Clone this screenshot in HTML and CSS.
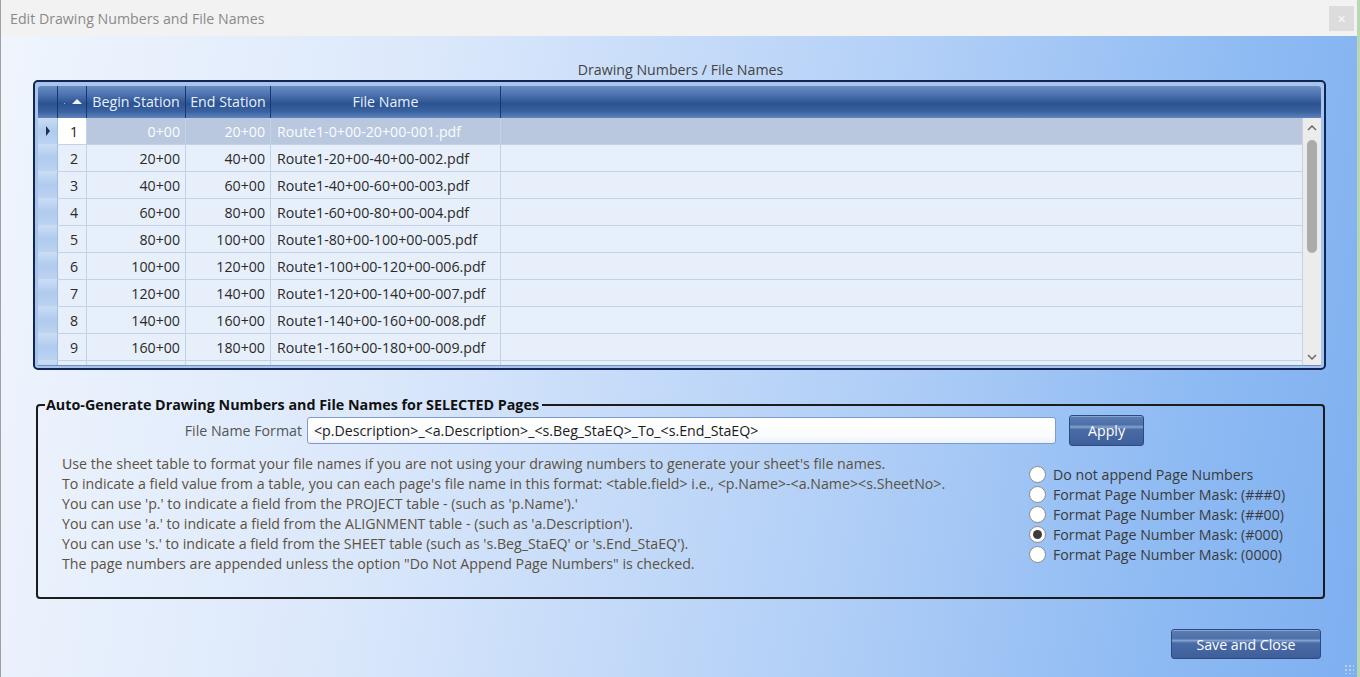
FILE: index.html
```html
<!DOCTYPE html>
<html lang="en">
<head>
  <meta charset="UTF-8">
  <title>Edit Drawing Numbers and File Names</title>
  <link rel="stylesheet" href="styles.css">
</head>
<body>
  <div class="dialog">
    <div class="titlebar">
      <span class="title">Edit Drawing Numbers and File Names</span>
      <span class="close">&#x2715;</span>
    </div>

    <div class="content">
      <div class="grid-caption">Drawing Numbers / File Names</div>

      <div class="grid">
        <div class="grid-inner">
          <div class="grid-head">
            <div class="hc c-sel"></div>
            <div class="hc c-num"><span class="dot"></span><span class="sort"></span></div>
            <div class="hc c-beg">Begin Station</div>
            <div class="hc c-end">End Station</div>
            <div class="hc c-file">File Name</div>
            <div class="hc c-fill"></div>
          </div>
          <div class="grid-body">
            <div class="rows">
              <div class="row selected">
                <div class="c c-sel"><span class="cur"></span></div>
                <div class="c c-num">1</div>
                <div class="c c-beg">0+00</div>
                <div class="c c-end">20+00</div>
                <div class="c c-file">Route1-0+00-20+00-001.pdf</div>
                <div class="c c-fill"></div>
              </div>
              <div class="row">
                <div class="c c-sel"></div><div class="c c-num">2</div><div class="c c-beg">20+00</div><div class="c c-end">40+00</div><div class="c c-file">Route1-20+00-40+00-002.pdf</div><div class="c c-fill"></div>
              </div>
              <div class="row">
                <div class="c c-sel"></div><div class="c c-num">3</div><div class="c c-beg">40+00</div><div class="c c-end">60+00</div><div class="c c-file">Route1-40+00-60+00-003.pdf</div><div class="c c-fill"></div>
              </div>
              <div class="row">
                <div class="c c-sel"></div><div class="c c-num">4</div><div class="c c-beg">60+00</div><div class="c c-end">80+00</div><div class="c c-file">Route1-60+00-80+00-004.pdf</div><div class="c c-fill"></div>
              </div>
              <div class="row">
                <div class="c c-sel"></div><div class="c c-num">5</div><div class="c c-beg">80+00</div><div class="c c-end">100+00</div><div class="c c-file">Route1-80+00-100+00-005.pdf</div><div class="c c-fill"></div>
              </div>
              <div class="row">
                <div class="c c-sel"></div><div class="c c-num">6</div><div class="c c-beg">100+00</div><div class="c c-end">120+00</div><div class="c c-file">Route1-100+00-120+00-006.pdf</div><div class="c c-fill"></div>
              </div>
              <div class="row">
                <div class="c c-sel"></div><div class="c c-num">7</div><div class="c c-beg">120+00</div><div class="c c-end">140+00</div><div class="c c-file">Route1-120+00-140+00-007.pdf</div><div class="c c-fill"></div>
              </div>
              <div class="row">
                <div class="c c-sel"></div><div class="c c-num">8</div><div class="c c-beg">140+00</div><div class="c c-end">160+00</div><div class="c c-file">Route1-140+00-160+00-008.pdf</div><div class="c c-fill"></div>
              </div>
              <div class="row">
                <div class="c c-sel"></div><div class="c c-num">9</div><div class="c c-beg">160+00</div><div class="c c-end">180+00</div><div class="c c-file">Route1-160+00-180+00-009.pdf</div><div class="c c-fill"></div>
              </div>
              <div class="row">
                <div class="c c-sel"></div><div class="c c-num"></div><div class="c c-beg"></div><div class="c c-end"></div><div class="c c-file"></div><div class="c c-fill"></div>
              </div>
            </div>
            <div class="vscroll">
              <svg class="arrow" width="12" height="8" viewBox="0 0 12 8"><path d="M2 6 L6 2 L10 6" fill="none" stroke="#606060" stroke-width="1.3"/></svg>
              <div class="track"><div class="thumb"></div></div>
              <svg class="arrow" width="12" height="8" viewBox="0 0 12 8"><path d="M2 2 L6 6 L10 2" fill="none" stroke="#606060" stroke-width="1.3"/></svg>
            </div>
          </div>
        </div>
      </div>

      <fieldset class="autogen">
        <legend>Auto-Generate Drawing Numbers and File Names for SELECTED Pages</legend>
        <div class="format-row">
          <label class="format-label">File Name Format</label>
          <div class="format-input">&lt;p.Description&gt;_&lt;a.Description&gt;_&lt;s.Beg_StaEQ&gt;_To_&lt;s.End_StaEQ&gt;</div>
          <button class="btn apply">Apply</button>
        </div>
        <div class="help-row">
          <div class="help">
            <p>Use the sheet table to format your file names if you are not using your drawing numbers to generate your sheet's file names.</p>
            <p>To indicate a field value from a table, you can each page's file name in this format: &lt;table.field&gt; i.e., &lt;p.Name&gt;-&lt;a.Name&gt;&lt;s.SheetNo&gt;.</p>
            <p>You can use 'p.' to indicate a field from the PROJECT table - (such as 'p.Name').'</p>
            <p>You can use 'a.' to indicate a field from the ALIGNMENT table - (such as 'a.Description').</p>
            <p>You can use 's.' to indicate a field from the SHEET table (such as 's.Beg_StaEQ' or 's.End_StaEQ').</p>
            <p>The page numbers are appended unless the option "Do Not Append Page Numbers" is checked.</p>
          </div>
          <div class="radios">
            <div class="radio"><span class="dot-r"></span>Do not append Page Numbers</div>
            <div class="radio"><span class="dot-r"></span>Format Page Number Mask: (###0)</div>
            <div class="radio"><span class="dot-r"></span>Format Page Number Mask: (##00)</div>
            <div class="radio"><span class="dot-r on"></span>Format Page Number Mask: (#000)</div>
            <div class="radio"><span class="dot-r"></span>Format Page Number Mask: (0000)</div>
          </div>
        </div>
      </fieldset>

      <div class="footer">
        <button class="btn save">Save and Close</button>
      </div>
    </div>
    <span class="grip"></span>
  </div>
</body>
</html>
```

FILE: styles.css
```css
html, body { margin: 0; height: 100%; }
body { font-family: "Open Sans", "Noto Sans", sans-serif; font-size: 14.2px; background: #b9d7b0; overflow: hidden; }

.dialog { position: relative; width: 1357px; height: 677px; display: flex; flex-direction: column; border-left: 1px solid #a0a0a0; box-sizing: border-box;
  background: linear-gradient(100deg, #f0f5fd 0%, #dbe8fb 30%, #b3d0f7 62%, #8fbbf3 85%, #7eaff0 100%); }

.titlebar { height: 36px; flex: none; background: #f2f2f2; display: flex; align-items: center; justify-content: space-between; padding: 0 3px 0 9px; }
.title { color: #8a8a8a; font-size: 14.2px; }
.close { width: 25px; height: 25px; background: #dcdcdc; color: #f8f8f8; font-size: 11px; display: flex; align-items: center; justify-content: center; }

.content { flex: 1; display: flex; flex-direction: column; padding: 24px 31px 0 32px; }
.grid-caption { text-align: center; color: #444; line-height: 20px; height: 20px; margin-left: 2px; }

.grid { height: 290px; box-sizing: border-box; border: 2px solid #0f2656; border-radius: 5px; padding: 4px 3px 3px 3px; background: #a9c4ea; }
.grid-inner { height: 100%; display: flex; flex-direction: column; border-bottom: 1px solid #6e8fc2; }

.grid-head { height: 32px; flex: none; display: flex; border-radius: 3px 3px 0 0;
  background: linear-gradient(#6a8cc2 0%, #4f75b0 25%, #2c5391 55%, #3a62a0 80%, #5f84bd 100%); }
.hc { color: #e9f0fb; line-height: 31px; text-align: center; border-right: 1px solid #173672; box-sizing: border-box; white-space: nowrap; }
.hc.c-fill { border-right: none; }
.hc.c-num { position: relative; }
.sort { position: absolute; left: 14px; top: 13px; border-left: 5px solid transparent; border-right: 5px solid transparent; border-bottom: 5px solid #eef3fb; }
.dot { position: absolute; left: 6px; top: 17px; width: 1px; height: 1px; background: #9db5da; }

.c-sel { width: 20px; flex: none; }
.c-num { width: 29px; flex: none; }
.c-beg { width: 99px; flex: none; }
.c-end { width: 85px; flex: none; }
.c-file { width: 230px; flex: none; }
.c-fill { flex: 1; }

.grid-body { flex: 1; display: flex; min-height: 0; }
.rows { flex: 1; overflow: hidden; background: #e7effa; }
.row { height: 27px; display: flex; }
.c { box-sizing: border-box; border-right: 1px solid #c3d2e6; border-bottom: 1px solid #c3d2e6; line-height: 27px; color: #2a2a2a; background: #e7effa; white-space: nowrap; }
.c.c-sel { background: linear-gradient(#c9dcf4, #b0cbee 50%, #bcd3f1); border-right: 1px solid #a3bde2; border-bottom: 1px solid #c9dbf2; position: relative; }
.c.c-num { text-align: right; padding-right: 8px; }
.c.c-beg, .c.c-end { text-align: right; padding-right: 5px; }
.c.c-file { padding-left: 6px; }
.row.selected .c { background: #b9c8de; color: #fbfcff; }
.row.selected .c.c-num { background: #ffffff; color: #222; }
.row.selected .c.c-sel { background: linear-gradient(#c9dcf4, #b0cbee 50%, #bcd3f1); }
.cur { position: absolute; left: 8px; top: 8px; border-top: 5px solid transparent; border-bottom: 5px solid transparent; border-left: 4px solid #1b2f55; }

.vscroll { width: 18px; flex: none; background: #ececec; display: flex; flex-direction: column; align-items: center; }
.arrow { margin: 6px 0 4px; flex: none; }
.track { flex: 1; width: 100%; display: flex; justify-content: center; }
.thumb { width: 10px; height: 113px; background: #ababab; border-radius: 5px; margin-top: 4px; }

.autogen { margin: 27px 1px 0 3px; border: 2px solid #1c1c1c; border-radius: 4px; padding: 0; height: 202px; box-sizing: border-box; min-width: 0; }
.autogen legend { font-weight: bold; font-size: 14.3px; color: #111; padding: 0 3px 0 1px; margin-left: 7px; line-height: 16px; }
.format-row { display: flex; align-items: center; margin-top: 2px; height: 30px; }
.format-label { width: 264px; text-align: right; color: #555; padding-right: 5px; }
.format-input { width: 749px; height: 27px; box-sizing: border-box; border: 1px solid #7d9ccc; border-radius: 3px; background: linear-gradient(#ffffff, #fbfcfe 70%, #eef2f8); padding-left: 6px; line-height: 25px; color: #1a1a1a; white-space: nowrap; }

.btn { font-family: inherit; font-size: 14.2px; color: #fff; border: 1px solid #2a4a82; border-radius: 3px; cursor: pointer;
  background: linear-gradient(#5a7db5 0%, #4d70aa 30%, #86a2cf 38%, #4a6ca6 46%, #3e5f99 100%); box-shadow: inset 0 1px 0 rgba(255,255,255,0.3); }
.apply { width: 75px; height: 31px; margin-left: 13px; }

.help-row { display: flex; margin-top: 9px; }
.help { flex: 1; padding-left: 24px; color: #5b5242; }
.help p { margin: 0; line-height: 20px; white-space: nowrap; }
.radios { flex: none; width: 294px; margin-top: 10px; }
.radio { display: flex; align-items: center; height: 20px; color: #3a3a3a; white-space: nowrap; }
.dot-r { width: 15px; height: 15px; border-radius: 50%; border: 1px solid #8a8a8a; background: #ffffff; margin-right: 7px; position: relative; flex: none; }
.dot-r.on::after { content: ""; position: absolute; left: 3px; top: 3px; width: 9px; height: 9px; border-radius: 50%; background: #3c3c3c; }

.footer { display: flex; justify-content: flex-end; margin-top: 30px; padding-right: 5px; }
.save { width: 150px; height: 30px; }

.grip { position: absolute; right: 3px; bottom: 3px; width: 10px; height: 10px;
  background: radial-gradient(circle, #b8cfee 1px, transparent 1.5px) 0 0 / 4px 4px; }
```
